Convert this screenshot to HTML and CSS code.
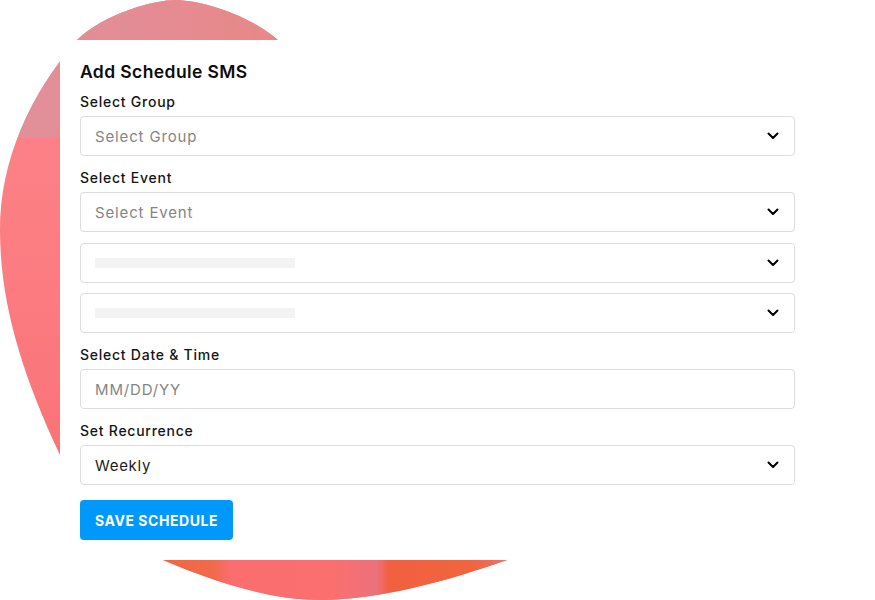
FILE: index.html
```html
<!DOCTYPE html>
<html lang="en">
<head>
<meta charset="utf-8">
<title>Add Schedule SMS</title>
<link rel="stylesheet" href="styles.css">
</head>
<body>
<div class="stage">
  <svg class="blob" width="875" height="600" viewBox="0 0 875 600" aria-hidden="true">
    <defs>
      <clipPath id="blobClip">
        <path d="M175,0 C200,0 248,14 278,40 C400,150 600,536 507,560 C450,580 380,600 320,600 C270,600 215,582 163,560 C110,535 80,500 60,455 C20,370 0,300 0,230 C0,160 30,95 77,40 C105,13 155,0 175,0 Z"/>
      </clipPath>
      <linearGradient id="gBase" x1="0" y1="0" x2="0" y2="1">
        <stop offset="0" stop-color="#fd868b"/>
        <stop offset="0.5" stop-color="#fb7b80"/>
        <stop offset="1" stop-color="#f86d6e"/>
      </linearGradient>
      <linearGradient id="gTop" x1="0" y1="0" x2="1" y2="0">
        <stop offset="0" stop-color="#e0909a"/>
        <stop offset="0.2" stop-color="#e58b92"/>
        <stop offset="0.35" stop-color="#e98682"/>
        <stop offset="0.6" stop-color="#ee7d62"/>
        <stop offset="1" stop-color="#f0765a"/>
      </linearGradient>
      <linearGradient id="gBottom" x1="0" y1="0" x2="875" y2="0" gradientUnits="userSpaceOnUse">
        <stop offset="0.18" stop-color="#f3653f"/>
        <stop offset="0.245" stop-color="#f06a4f"/>
        <stop offset="0.265" stop-color="#fb6e70"/>
        <stop offset="0.38" stop-color="#fb6f6f"/>
        <stop offset="0.43" stop-color="#ec717a"/>
        <stop offset="0.445" stop-color="#f2603f"/>
        <stop offset="0.54" stop-color="#f0653f"/>
        <stop offset="0.585" stop-color="#e8717a"/>
      </linearGradient>
    </defs>
    <g clip-path="url(#blobClip)">
      <rect x="0" y="0" width="875" height="600" fill="url(#gBase)"/>
      <rect x="0" y="0" width="875" height="138" fill="url(#gTop)"/>
      <rect x="0" y="540" width="875" height="60" fill="url(#gBottom)"/>
    </g>
  </svg>

  <main class="card">
    <h2 class="title">Add Schedule SMS</h2>
    <form class="form">
      <div class="field">
        <label class="label">Select Group</label>
        <div class="select">
          <span class="placeholder">Select Group</span>
          <svg class="chev" width="12" height="8" viewBox="0 0 12 8"><path d="M1.5 1.5 L6 6 L10.5 1.5" fill="none" stroke="#000" stroke-width="2" stroke-linecap="round" stroke-linejoin="round"/></svg>
        </div>
      </div>
      <div class="field">
        <label class="label">Select Event</label>
        <div class="select">
          <span class="placeholder">Select Event</span>
          <svg class="chev" width="12" height="8" viewBox="0 0 12 8"><path d="M1.5 1.5 L6 6 L10.5 1.5" fill="none" stroke="#000" stroke-width="2" stroke-linecap="round" stroke-linejoin="round"/></svg>
        </div>
      </div>
      <div class="select select-gap">
        <span class="skeleton"></span>
        <svg class="chev" width="12" height="8" viewBox="0 0 12 8"><path d="M1.5 1.5 L6 6 L10.5 1.5" fill="none" stroke="#000" stroke-width="2" stroke-linecap="round" stroke-linejoin="round"/></svg>
      </div>
      <div class="select">
        <span class="skeleton"></span>
        <svg class="chev" width="12" height="8" viewBox="0 0 12 8"><path d="M1.5 1.5 L6 6 L10.5 1.5" fill="none" stroke="#000" stroke-width="2" stroke-linecap="round" stroke-linejoin="round"/></svg>
      </div>
      <div class="field">
        <label class="label">Select Date &amp; Time</label>
        <div class="select">
          <span class="placeholder">MM/DD/YY</span>
        </div>
      </div>
      <div class="field">
        <label class="label">Set Recurrence</label>
        <div class="select">
          <span class="value">Weekly</span>
          <svg class="chev" width="12" height="8" viewBox="0 0 12 8"><path d="M1.5 1.5 L6 6 L10.5 1.5" fill="none" stroke="#000" stroke-width="2" stroke-linecap="round" stroke-linejoin="round"/></svg>
        </div>
      </div>
      <div class="actions">
        <button type="button" class="btn">SAVE SCHEDULE</button>
      </div>
    </form>
  </main>
</div>
</body>
</html>
```

FILE: styles.css
```css
html, body {
  margin: 0;
  padding: 0;
  background: #ffffff;
}

body {
  font-family: "Inter", "Open Sans", "Liberation Sans", sans-serif;
  color: #111111;
  overflow: hidden;
}

.stage {
  position: relative;
  width: 875px;
  height: 600px;
  overflow: hidden;
  padding-top: 40px;
  box-sizing: border-box;
}

.blob {
  position: absolute;
  left: 0;
  top: 0;
  z-index: 0;
}

.card {
  position: relative;
  z-index: 1;
  margin-left: 60px;
  width: 815px;
  height: 520px;
  box-sizing: border-box;
  padding: 20px 80px 20px 20px;
  background: #ffffff;
}

.title {
  margin: 0 0 6px 0;
  font-size: 17.5px;
  line-height: 24px;
  font-weight: 600;
  color: #0d0d0d;
  letter-spacing: 0.4px;
}

.form {
  display: flex;
  flex-direction: column;
  gap: 10px;
}

.field {
  display: flex;
  flex-direction: column;
}

.label {
  font-size: 14px;
  line-height: 23px;
  font-weight: 500;
  color: #151515;
  margin-bottom: 3px;
  letter-spacing: 0.75px;
}

.select {
  height: 40px;
  box-sizing: border-box;
  border: 1px solid #dcdcdc;
  border-radius: 4px;
  display: flex;
  align-items: center;
  justify-content: space-between;
  padding: 0 15px 0 14px;
  background: #ffffff;
}

.select-gap {
  margin-top: 1px;
}

.placeholder {
  font-size: 15px;
  color: #858585;
  letter-spacing: 0.85px;
}

.value {
  font-size: 15px;
  color: #1c1c1c;
  letter-spacing: 0.7px;
}

.skeleton {
  width: 200px;
  height: 10px;
  background: #f3f3f3;
}

.chev {
  display: block;
  flex: none;
}

.actions {
  margin-top: 5px;
  display: flex;
}

.btn {
  height: 40px;
  padding: 0 15px;
  border: none;
  border-radius: 4px;
  background: #0099fb;
  color: #ffffff;
  font-family: inherit;
  font-size: 14px;
  font-weight: 700;
  letter-spacing: 0.55px;
  cursor: pointer;
}
```
